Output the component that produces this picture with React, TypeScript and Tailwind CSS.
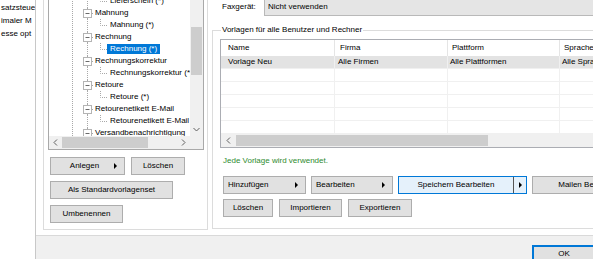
import { ReactNode } from 'react';

interface TreeItem {
    Text: string;
    IsChild: boolean;
    IsSelected?: boolean;
}

const TreeItems: TreeItem[] = [
    { Text: 'Lieferschein (*)', IsChild: true },
    { Text: 'Mahnung', IsChild: false },
    { Text: 'Mahnung (*)', IsChild: true },
    { Text: 'Rechnung', IsChild: false },
    { Text: 'Rechnung (*)', IsChild: true, IsSelected: true },
    { Text: 'Rechnungskorrektur', IsChild: false },
    { Text: 'Rechnungskorrektur (*)', IsChild: true },
    { Text: 'Retoure', IsChild: false },
    { Text: 'Retoure (*)', IsChild: true },
    { Text: 'Retourenetikett E-Mail', IsChild: false },
    { Text: 'Retourenetikett E-Mail', IsChild: true },
    { Text: 'Versandbenachrichtigung', IsChild: false },
];

// Column widths follow the header dividers in the list view
const Columns = [
    { Title: 'Name', Head: 'w-[114px] pl-[7px]', Body: 'w-[114px] pl-[7px]' },
    { Title: 'Firma', Head: 'w-[113px] pl-[5px]', Body: 'w-[113px] pl-[3px]' },
    { Title: 'Plattform', Head: 'w-[112px] pl-[4px]', Body: 'w-[112px] pl-[2px]' },
    { Title: 'Sprache', Head: 'w-[120px] pl-[4px]', Body: 'w-[120px] pl-[2px]' },
];

const Rows: string[][] = [
    ['Vorlage Neu', 'Alle Firmen', 'Alle Plattformen', 'Alle Sprachen'],
    ['', '', '', ''],
    ['', '', '', ''],
    ['', '', '', ''],
    ['', '', '', ''],
    ['', '', '', ''],
];

const DotColor = '#a8a8a8';

function TreeLines({ IsChild }: { IsChild: boolean }) {

    if (IsChild) {

        return (

            <svg width="42" height="12" className="shrink-0">

                <line x1="7.5" y1="0" x2="7.5" y2="12" stroke={DotColor} strokeDasharray="1 1" />
                <line x1="22.5" y1="0" x2="22.5" y2="12" stroke={DotColor} strokeDasharray="1 1" />
                <path d="M35.5 0V6.5H42" fill="none" stroke={DotColor} strokeDasharray="1 1" />

            </svg>

        );

    }

    return (

        <svg width="29" height="12" className="shrink-0">

            <line x1="7.5" y1="0" x2="7.5" y2="12" stroke={DotColor} strokeDasharray="1 1" />
            <line x1="22.5" y1="0" x2="22.5" y2="2" stroke={DotColor} />
            <line x1="22.5" y1="11" x2="22.5" y2="12" stroke={DotColor} />
            <rect x="18.5" y="2.5" width="8" height="8" fill="#fff" stroke="#b4b4b4" />
            <line x1="20.5" y1="6.5" x2="24.5" y2="6.5" stroke="#6a6a6a" />
            <line x1="27" y1="6.5" x2="29" y2="6.5" stroke={DotColor} strokeDasharray="1 1" />

        </svg>

    );

}

function Chevron({ Direction }: { Direction: 'left' | 'right' | 'down' }) {

    if (Direction == 'down') {

        return (

            <svg width="7" height="5">
                <polyline points="0.5,1 3.5,4 6.5,1" fill="none" stroke="#606060" />
            </svg>

        );

    }

    return (

        <svg width="5" height="7">
            <polyline points={Direction == 'left' ? '4,0.5 1,3.5 4,6.5' : '1,0.5 4,3.5 1,6.5'} fill="none" stroke="#606060" />
        </svg>

    );

}

function MenuArrow() {

    return <span className="w-0 h-0 shrink-0 border-y-[3px] border-y-transparent border-l-[3px] border-l-black" />;

}

function Button({ Width, children }: { Width: string; children: ReactNode }) {

    return (

        <div className={`${Width} h-[18px] shrink-0 bg-[#e1e1e1] border border-[#adadad] flex items-center justify-center`}>
            {children}
        </div>

    );

}

function DropButton({ Width, Label }: { Width: string; Label: string }) {

    return (

        <div className={`${Width} h-[18px] shrink-0 bg-[#e1e1e1] border border-[#adadad] flex items-center justify-between pl-[4px] pr-[7px]`}>
            <span>{Label}</span>
            <MenuArrow />
        </div>

    );

}

function TemplateTree() {

    return (

        <div className="flex-1 min-h-0 border border-[#a9a9a9] bg-white flex flex-col">

            <div className="flex-1 min-h-0 flex">

                <div className="flex-1 min-w-0 overflow-hidden pt-[1px]">

                    {TreeItems.map((Item, Index) => (

                        <div key={Index} className="h-[12px] flex items-center pl-[16px] whitespace-nowrap">

                            <TreeLines IsChild={Item.IsChild} />

                            {Item.IsChild ? (

                                <span className={`h-[10px] leading-[10px] px-[3px] ${Item.IsSelected ? 'bg-[#0078d7] text-white' : ''}`}>{Item.Text}</span>

                            ) : (

                                <span className="pl-[1px]">{Item.Text}</span>

                            )}

                        </div>

                    ))}

                </div>

                <div className="w-[13px] shrink-0 bg-[#f0f0f0] flex flex-col px-[1px]">
                    <div className="h-[33px]" />
                    <div className="h-[48px] bg-[#cdcdcd]" />
                    <div className="flex-1" />
                    <div className="h-[13px] flex items-center justify-center">
                        <Chevron Direction="down" />
                    </div>
                </div>

            </div>

            <div className="h-[13px] shrink-0 flex">

                <div className="flex-1 bg-[#f0f0f0] flex">
                    <div className="w-[13px] flex items-center justify-center">
                        <Chevron Direction="left" />
                    </div>
                    <div className="w-[86px] my-[1px] bg-[#cdcdcd]" />
                    <div className="flex-1" />
                    <div className="w-[13px] flex items-center justify-center">
                        <Chevron Direction="right" />
                    </div>
                </div>

                <div className="w-[13px] bg-[#f0f0f0]" />

            </div>

        </div>

    );

}

function TemplateList() {

    return (

        <div className="mt-[4px] border border-[#abadb3] bg-white flex flex-col">

            <div className="h-[16px] flex">
                {Columns.map((Column) => (
                    <div key={Column.Title} className={`${Column.Head} shrink-0 border-r border-[#e5e5e5] flex items-center`}>
                        {Column.Title}
                    </div>
                ))}
            </div>

            {Rows.map((Row, RowIndex) => (

                <div key={RowIndex} className={`h-[13px] flex border-b border-[#f0f0f0] ${RowIndex == 0 ? 'bg-[#e3e3e3]' : ''}`}>
                    {Columns.map((Column, ColumnIndex) => (
                        <div key={Column.Title} className={`${Column.Body} shrink-0 border-r border-[#f0f0f0] flex items-center whitespace-nowrap`}>
                            {Row[ColumnIndex]}
                        </div>
                    ))}
                </div>

            ))}

            <div className="h-[13px] flex bg-[#f0f0f0]">
                <div className="w-[15px] flex items-center justify-center">
                    <Chevron Direction="left" />
                </div>
                <div className="w-[252px] my-[1px] bg-[#cdcdcd]" />
            </div>

        </div>

    );

}

export default function App() {

    return (

        <div className="w-[593px] h-[259px] overflow-hidden flex bg-white text-black text-[8px] leading-[10px] font-['Liberation_Sans',Arial,sans-serif]">

            <div className="w-[36px] shrink-0 border-r border-[#c8c8c8] pt-[1px] overflow-hidden whitespace-nowrap leading-[13px] pl-[1px]">
                <div>satzsteue</div>
                <div>imaler M</div>
                <div>esse opt</div>
            </div>

            <div className="flex-1 min-w-0 flex flex-col">

                <div className="h-[236px] shrink-0 flex border-b border-[#d9d9d9] pl-[7px]">

                    <div className="w-[165px] shrink-0 -mt-[12px] mb-[5px] border border-[#dcdcdc] flex flex-col pl-[4px] pr-[3px] pt-[4px]">

                        <TemplateTree />

                        <div className="pt-[7px] pb-[6px] pl-[2px] flex flex-col gap-[6px]">

                            <div className="flex gap-[6px]">
                                <div className="w-[75px] h-[18px] shrink-0 bg-[#e1e1e1] border border-[#adadad] flex items-center pr-[7px]">
                                    <span className="flex-1 text-center pl-[4px]">Anlegen</span>
                                    <MenuArrow />
                                </div>
                                <Button Width="w-[54px]">Löschen</Button>
                            </div>

                            <div className="flex">
                                <Button Width="w-[123px]">Als Standardvorlagenset</Button>
                            </div>

                            <div className="flex">
                                <Button Width="w-[73px]">Umbenennen</Button>
                            </div>

                        </div>

                    </div>

                    <div className="w-[480px] shrink-0 pl-[4px] -mt-[3px] flex flex-col">

                        <div className="h-[19px] shrink-0 flex items-center pl-[10px]">
                            <span className="w-[42px] shrink-0">Faxgerät:</span>
                            <div className="flex-1 h-full border border-[#b9b9b9] bg-[#e5e5e5] flex items-center pl-[3px]">
                                Nicht verwenden
                            </div>
                        </div>

                        <fieldset className="mt-[9px] min-w-0 border border-[#dcdcdc] pl-[7px] pb-[11px]">

                            <legend className="ml-[1px] px-[1px] leading-[10px]">Vorlagen für alle Benutzer und Rechner</legend>

                            <TemplateList />

                            <div className="mt-[8px] pl-[3px] text-[#2e8b2e]">Jede Vorlage wird verwendet.</div>

                            <div className="mt-[10px] pl-[3px] flex gap-[5px]">

                                <DropButton Width="w-[83px]" Label="Hinzufügen" />
                                <DropButton Width="w-[82px]" Label="Bearbeiten" />

                                <div className="w-[129px] h-[18px] shrink-0 bg-[#e5f1fb] border border-[#0078d7] flex items-center">
                                    <span className="flex-1 text-center">Speichern Bearbeiten</span>
                                    <span className="w-px h-full bg-[#555]" />
                                    <span className="w-[12px] flex justify-center"><MenuArrow /></span>
                                </div>

                                <div className="w-[129px] h-[18px] shrink-0 bg-[#e1e1e1] border border-[#adadad] flex items-center">
                                    <span className="flex-1 text-center">Mailen Bearbeiten</span>
                                    <span className="w-[12px] flex justify-center"><MenuArrow /></span>
                                </div>

                            </div>

                            <div className="mt-[5px] pl-[3px] flex gap-[6px]">
                                <Button Width="w-[50px]">Löschen</Button>
                                <Button Width="w-[63px]">Importieren</Button>
                                <Button Width="w-[64px]">Exportieren</Button>
                            </div>

                        </fieldset>

                    </div>

                </div>

                <div className="flex-1 bg-[#f0f0f0] flex justify-end pt-[9px]">
                    <div className="w-[64px] h-[17px] shrink-0 -mr-[3px] border-2 border-[#0078d7] bg-[#e1e1e1] flex items-center justify-center">
                        OK
                    </div>
                </div>

            </div>

        </div>

    );

}
